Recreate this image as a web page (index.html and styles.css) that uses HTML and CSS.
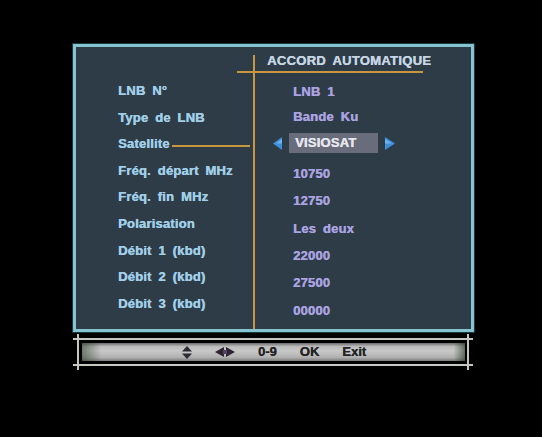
FILE: index.html
```
<!DOCTYPE html>
<html lang="fr">
<head>
<meta charset="utf-8">
<title>Accord automatique</title>
<link rel="stylesheet" href="styles.css">
</head>
<body>
<div class="screen">
  <div class="panel">
    <div class="labels">
      <div class="label">LNB N°</div>
      <div class="label">Type de LNB</div>
      <div class="label sat"><span>Satellite</span><span class="lead"></span></div>
      <div class="label">Fréq. départ MHz</div>
      <div class="label">Fréq. fin MHz</div>
      <div class="label">Polarisation</div>
      <div class="label">Débit 1 (kbd)</div>
      <div class="label">Débit 2 (kbd)</div>
      <div class="label">Débit 3 (kbd)</div>
    </div>
    <div class="values-col">
      <div class="header">ACCORD AUTOMATIQUE</div>
      <div class="values">
        <div class="val">LNB 1</div>
        <div class="val">Bande Ku</div>
        <div class="val select">
          <svg class="arrow" width="9" height="13" viewBox="0 0 9 13"><polygon points="9,0 0,6.5 9,13" fill="#3d8fdc"/><polygon points="9,2 3,6.5 9,6.5" fill="#6fb3ec"/></svg>
          <span class="box">VISIOSAT</span>
          <svg class="arrow" width="10" height="13" viewBox="0 0 10 13"><polygon points="0,0 10,6.5 0,13" fill="#3d8fdc"/><polygon points="0,2 7,6.5 0,6.5" fill="#6fb3ec"/></svg>
        </div>
        <div class="val">10750</div>
        <div class="val">12750</div>
        <div class="val">Les deux</div>
        <div class="val">22000</div>
        <div class="val">27500</div>
        <div class="val">00000</div>
      </div>
    </div>
  </div>
  <div class="footer">
    <div class="bar">
      <svg class="icon" width="10" height="13" viewBox="0 0 10 13"><polygon points="5,0 10,5.5 0,5.5" fill="#2e2b33"/><polygon points="0,7.5 10,7.5 5,13" fill="#2e2b33"/></svg>
      <svg class="icon lr" width="20" height="10" viewBox="0 0 20 10"><polygon points="0,5 9,0 9,10" fill="#2b2630"/><polygon points="11,0 20,5 11,10" fill="#2b2630"/><rect x="8" y="3" width="4" height="4" fill="#5a3f66"/></svg>
      <span class="key">0-9</span>
      <span class="key">OK</span>
      <span class="key">Exit</span>
    </div>
  </div>
</div>
</body>
</html>
```
FILE: styles.css
```
* { box-sizing: border-box; }
html, body {
  margin: 0;
  padding: 0;
  background: #000;
}
body {
  width: 542px;
  height: 437px;
  overflow: hidden;
  font-family: "Liberation Sans", Arial, sans-serif;
  font-weight: bold;
  font-size: 13px;
}
.screen {
  padding-top: 44px;
  padding-left: 73px;
}
.panel {
  width: 401px;
  height: 288px;
  background: #2e3c47;
  border: 3px solid #86c4d2;
  box-shadow: 0 0 0 1px #1c3a3c;
  display: flex;
  align-items: stretch;
}
.labels {
  width: 179px;
  margin-top: 8px;
  padding-top: 23px;
  padding-left: 42px;
  border-right: 2px solid #c8963f;
  color: #a0cfe7;
  letter-spacing: 0.2px;
  word-spacing: 3px;
  text-shadow: 0.4px 0 0 currentColor;
}
.label {
  height: 26.6px;
  line-height: 26.6px;
  white-space: nowrap;
}
.label.sat {
  display: flex;
  align-items: center;
}
.lead {
  flex: 1;
  height: 2px;
  background: #c8963f;
  margin: 4px 3px 0 2px;
}
.values-col {
  flex: 1;
  padding-top: 6px;
}
.header {
  margin-left: -18px;
  width: 186px;
  padding-left: 30px;
  padding-bottom: 2px;
  line-height: 16px;
  border-bottom: 2px solid #c8963f;
  color: #c5d5e3;
  white-space: nowrap;
  letter-spacing: 0.3px;
  word-spacing: 3px;
  text-shadow: 0.4px 0 0 currentColor;
}
.values {
  margin-top: 5px;
  padding-left: 38px;
  display: grid;
  grid-template-rows: 26px 24px 32px repeat(6, 27.3px);
  color: #aaa3e0;
  letter-spacing: 0.2px;
  word-spacing: 3px;
  text-shadow: 0.4px 0 0 currentColor;
}
.val {
  display: flex;
  align-items: center;
  white-space: nowrap;
}
.val.select {
  margin-left: -20px;
  gap: 7px;
  padding-bottom: 2px;
}
.box {
  width: 89px;
  height: 20px;
  line-height: 20px;
  padding-left: 6px;
  background: #696c7b;
  color: #e6e6ee;
}
.arrow { display: block; }
.footer {
  position: relative;
  width: 400px;
  margin-top: 6px;
  border-top: 2px solid #c4c8c0;
  border-bottom: 2px solid #c4c8c0;
  padding: 3px 8px 3px 9px;
}
.footer::before,
.footer::after {
  content: "";
  position: absolute;
  top: -6px;
  bottom: -6px;
  width: 2px;
  background: #c4c8c0;
}
.footer::before { left: 4px; }
.footer::after { right: 4px; }
.bar {
  height: 18px;
  display: flex;
  align-items: center;
  gap: 23px;
  padding-left: 100px;
  background:
    linear-gradient(to right, rgba(40,60,40,0.55) 0, rgba(0,0,0,0) 5%, rgba(0,0,0,0) 97%, rgba(30,50,30,0.6) 100%),
    linear-gradient(to bottom, #6e6e6e 0, #bcbcbc 20%, #c8c8c8 45%, #b0b0b0 80%, #7a7a7a 100%);
  color: #242424;
}
.icon { display: block; }
.key {
  line-height: 18px;
  white-space: nowrap;
  text-shadow: 0.3px 0 0 currentColor;
}
```
